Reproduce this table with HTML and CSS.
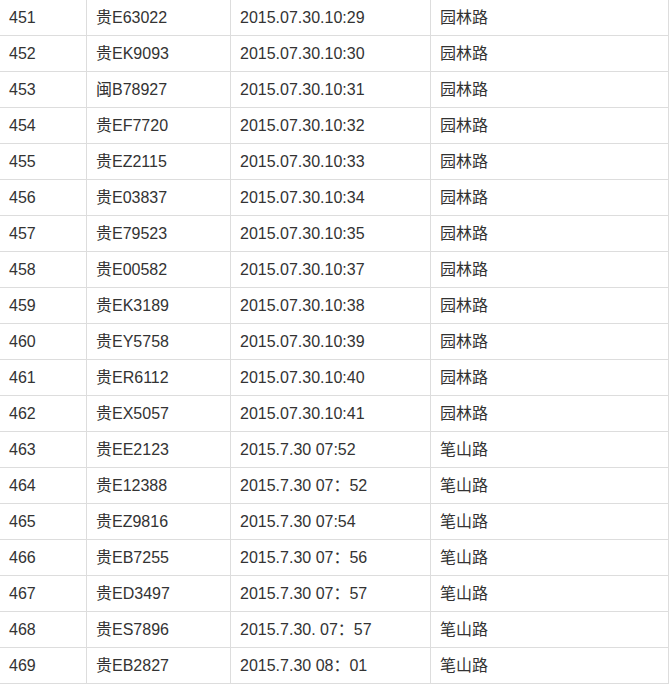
FILE: index.html
```html
<!DOCTYPE html>
<html lang="zh-CN">
<head>
<meta charset="utf-8">
<title>车辆记录</title>
<link rel="stylesheet" href="styles.css">
</head>
<body>
<div class="table">
  <div class="row"><div class="cell">451</div><div class="cell">贵E63022</div><div class="cell">2015.07.30.10:29</div><div class="cell">园林路</div></div>
  <div class="row"><div class="cell">452</div><div class="cell">贵EK9093</div><div class="cell">2015.07.30.10:30</div><div class="cell">园林路</div></div>
  <div class="row"><div class="cell">453</div><div class="cell">闽B78927</div><div class="cell">2015.07.30.10:31</div><div class="cell">园林路</div></div>
  <div class="row"><div class="cell">454</div><div class="cell">贵EF7720</div><div class="cell">2015.07.30.10:32</div><div class="cell">园林路</div></div>
  <div class="row"><div class="cell">455</div><div class="cell">贵EZ2115</div><div class="cell">2015.07.30.10:33</div><div class="cell">园林路</div></div>
  <div class="row"><div class="cell">456</div><div class="cell">贵E03837</div><div class="cell">2015.07.30.10:34</div><div class="cell">园林路</div></div>
  <div class="row"><div class="cell">457</div><div class="cell">贵E79523</div><div class="cell">2015.07.30.10:35</div><div class="cell">园林路</div></div>
  <div class="row"><div class="cell">458</div><div class="cell">贵E00582</div><div class="cell">2015.07.30.10:37</div><div class="cell">园林路</div></div>
  <div class="row"><div class="cell">459</div><div class="cell">贵EK3189</div><div class="cell">2015.07.30.10:38</div><div class="cell">园林路</div></div>
  <div class="row"><div class="cell">460</div><div class="cell">贵EY5758</div><div class="cell">2015.07.30.10:39</div><div class="cell">园林路</div></div>
  <div class="row"><div class="cell">461</div><div class="cell">贵ER6112</div><div class="cell">2015.07.30.10:40</div><div class="cell">园林路</div></div>
  <div class="row"><div class="cell">462</div><div class="cell">贵EX5057</div><div class="cell">2015.07.30.10:41</div><div class="cell">园林路</div></div>
  <div class="row"><div class="cell">463</div><div class="cell">贵EE2123</div><div class="cell">2015.7.30 07:52</div><div class="cell">笔山路</div></div>
  <div class="row"><div class="cell">464</div><div class="cell">贵E12388</div><div class="cell">2015.7.30 07：52</div><div class="cell">笔山路</div></div>
  <div class="row"><div class="cell">465</div><div class="cell">贵EZ9816</div><div class="cell">2015.7.30 07:54</div><div class="cell">笔山路</div></div>
  <div class="row"><div class="cell">466</div><div class="cell">贵EB7255</div><div class="cell">2015.7.30 07：56</div><div class="cell">笔山路</div></div>
  <div class="row"><div class="cell">467</div><div class="cell">贵ED3497</div><div class="cell">2015.7.30 07：57</div><div class="cell">笔山路</div></div>
  <div class="row"><div class="cell">468</div><div class="cell">贵ES7896</div><div class="cell">2015.7.30. 07：57</div><div class="cell">笔山路</div></div>
  <div class="row"><div class="cell">469</div><div class="cell">贵EB2827</div><div class="cell">2015.7.30 08：01</div><div class="cell">笔山路</div></div>
</div>
</body>
</html>
```
FILE: styles.css
```css
html, body {
  margin: 0;
  padding: 0;
  background: #fff;
}
body {
  font-family: "Liberation Sans", "Noto Sans CJK SC", sans-serif;
  font-size: 16px;
  line-height: 20px;
  color: #333;
}
.table {
  display: flex;
  flex-direction: column;
  width: 670px;
  margin: -1px 0 0 -1px;
  border-left: 1px solid #ddd;
  border-top: 1px solid #ddd;
  box-sizing: border-box;
}
.row {
  display: grid;
  grid-template-columns: 87px 144px 200px 238px;
  height: 36px;
}
.cell {
  box-sizing: border-box;
  border-right: 1px solid #ddd;
  border-bottom: 1px solid #ddd;
  padding: 0 9px;
  display: flex;
  align-items: center;
  white-space: nowrap;
}
```
